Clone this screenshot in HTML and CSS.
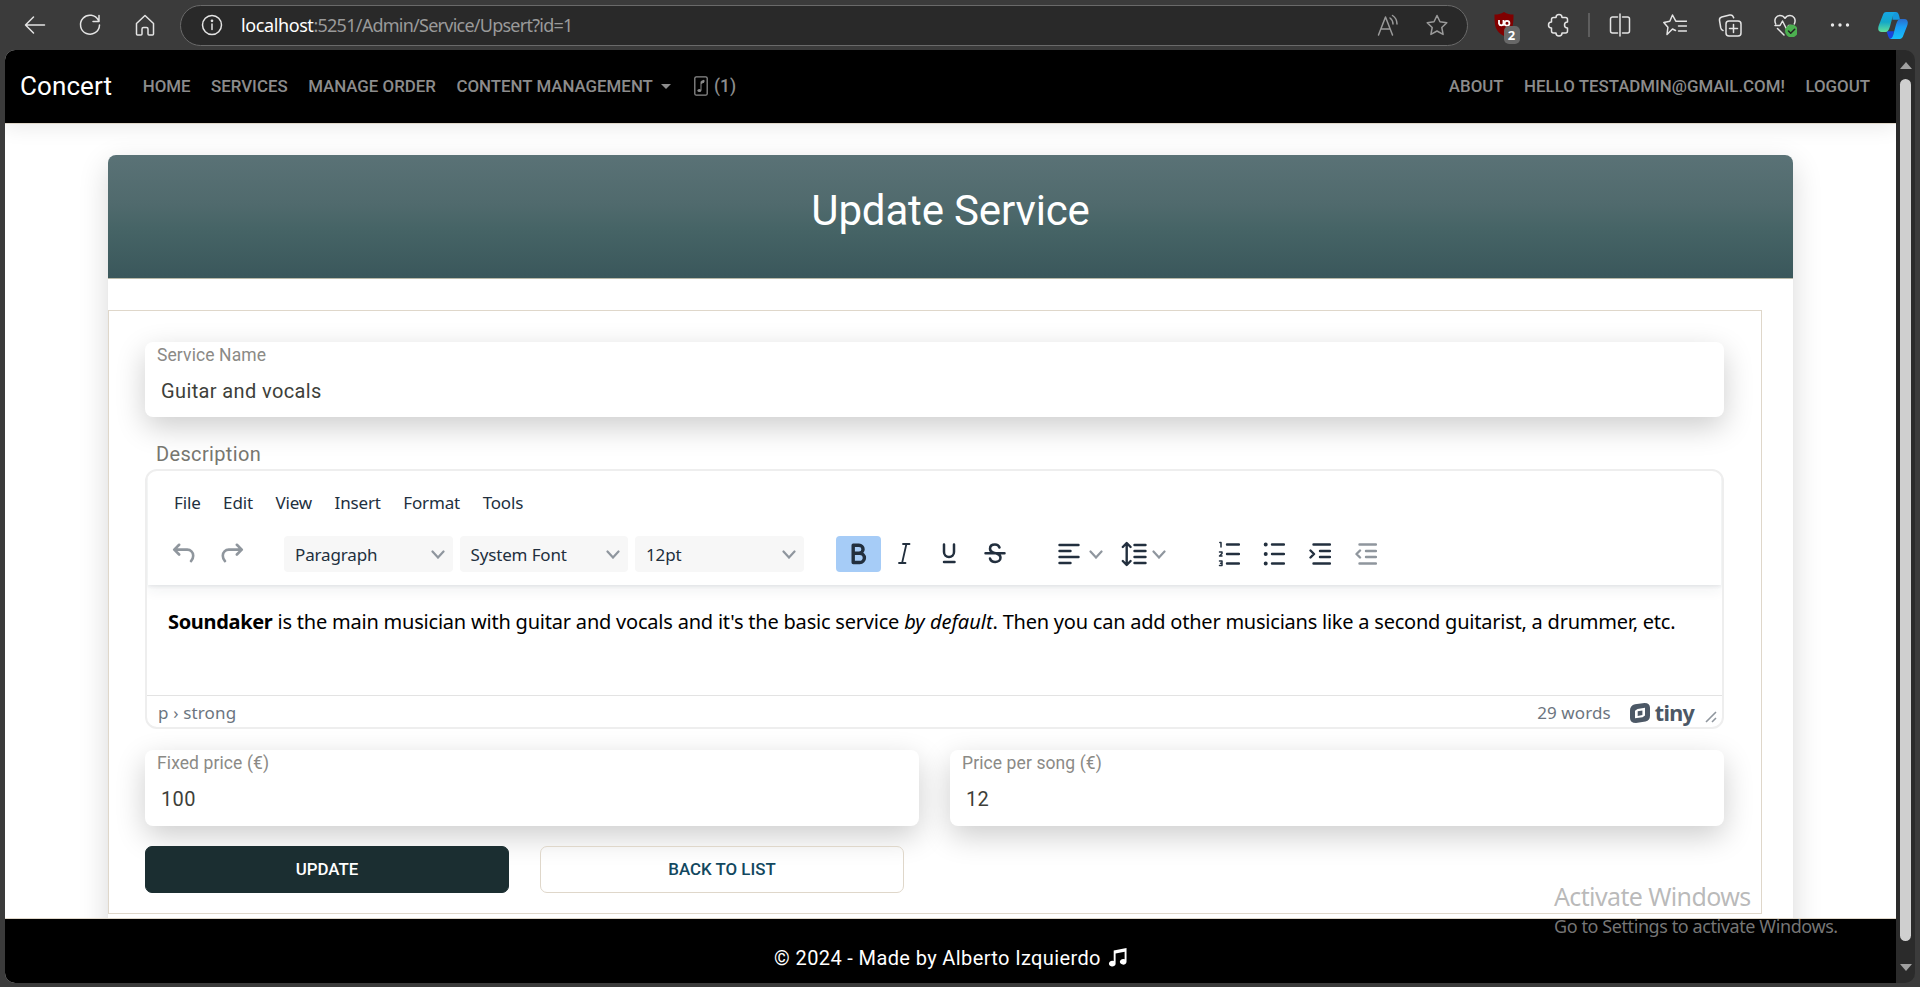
FILE: index.html
```html
<!DOCTYPE html>
<html lang="en">
<head>
<meta charset="utf-8">
<title>Update Service - Concert</title>
<link rel="stylesheet" href="styles.css">
</head>
<body>
<div class="browser">
  <header class="chrome">
    <svg class="ic back" viewBox="0 0 24 24"><path d="M21.500 12H3M10.500 4 2.500 12l8 8"/></svg>
    <svg class="ic reload" viewBox="0 0 24 24"><path d="M20.500 7.500A9.500 9.500 0 1 0 21.500 12M21 2.500v6h-6"/></svg>
    <svg class="ic home" viewBox="0 0 24 24"><path d="M3.500 10.500 12 2.500l8.500 8V21a1 1 0 0 1-1 1h-3.500a1 1 0 0 1-1-1v-5a1.500 1.500 0 0 0-1.500-1.500h-3A1.500 1.500 0 0 0 9 16v5a1 1 0 0 1-1 1H4.500a1 1 0 0 1-1-1z"/></svg>
    <div class="address">
      <svg class="ic info" viewBox="0 0 24 24"><circle cx="12" cy="12" r="9.500"/><path d="M12 11v5.500"/><circle cx="12" cy="7.800" r=".6"/></svg>
      <span class="url"><b>localhost</b>:5251/Admin/Service/Upsert?id=1</span>
      <svg class="ic aloud" viewBox="0 0 24 24"><path d="M2.500 22 9.500 4l7 18M5 16h9M14 5c2 1.500 3 3.500 3 6M16.500 2.500c3 2 4.500 5 4.500 8.500"/></svg>
      <svg class="ic star" viewBox="0 0 24 24"><path d="m12 2.500 3 6.300 6.800.9-5 4.800 1.300 6.900L12 18l-6.100 3.400 1.300-6.900-5-4.800 6.800-.9z"/></svg>
    </div>
    <div class="ext">
      <svg class="shield" viewBox="0 0 24 26"><path fill="#800000" d="M12 0c3 2 6 2.500 9.500 2.500 0 11-.5 17-9.500 21.500C3 19.500 2.500 13.500 2.500 2.500 6 2.500 9 2 12 0z"/><path fill="none" stroke="#fff" stroke-width="1.800" d="M7 8v3.500a2.300 2.300 0 0 0 4.500 0V8M11.500 8v5.800"/><circle cx="15" cy="11.200" r="2.400" fill="none" stroke="#fff" stroke-width="1.800"/></svg>
      <span class="badge">2</span>
    </div>
    <svg class="ic puzzle" viewBox="0 0 24 24"><path d="M6.500 4.500H9a3 3 0 0 1 6 0h3.500a2 2 0 0 1 2 2V9a3 3 0 0 0 0 6v3a2 2 0 0 1-2 2H15a3 3 0 0 1-6 0H6.500a2 2 0 0 1-2-2v-3a3 3 0 0 1 0-6V6.500a2 2 0 0 1 2-2z"/></svg>
    <span class="divider"></span>
    <svg class="ic split" viewBox="0 0 24 24"><path d="M12 1v22M9.500 4h-5a2 2 0 0 0-2 2v12a2 2 0 0 0 2 2h5M14.500 4h5a2 2 0 0 1 2 2v12a2 2 0 0 1-2 2h-5"/></svg>
    <svg class="ic favs" viewBox="0 0 24 24"><path d="M12.500 17.500 9.500 16 4 21.500l.9-7.200L.8 9.500l6-1.300L9.500 2l3.300 6.200H23.500M15.500 13h8M15.500 18h8"/></svg>
    <svg class="ic coll" viewBox="0 0 24 24"><rect x="8" y="8" width="15" height="15" rx="3"/><path d="M15.500 11.500v8M11.500 15.500h8M5 17.500C3 17 3 16 2.700 14.500L1.500 7.500C1.200 5.500 2.200 4.500 3.700 4l8-2c2-.4 3.200.3 4 2.800"/></svg>
    <svg class="ic perf" viewBox="0 0 24 24"><path d="M2.700 11C.5 6 3.500 2.500 7 2.500c2 0 3.800 1 5 2.800 1.200-1.800 3-2.800 5-2.800 3.500 0 6.500 3.500 4.300 8.500M2 12.500h5L9.500 8l4 8 2-3.500h2M4.500 15.500 11 22"/><circle class="ok" cx="18.500" cy="18" r="6.500"/><path stroke-width="1.500" d="m15.500 18 2.200 2.200 4-4"/></svg>
    <svg class="ic dots" viewBox="0 0 24 24"><g fill="#e8e8e8" stroke="none"><circle cx="4.500" cy="12" r="1.700"/><circle cx="12" cy="12" r="1.700"/><circle cx="19.500" cy="12" r="1.700"/></g></svg>
    <svg class="copilot" viewBox="0 0 32 31" preserveAspectRatio="none"><defs><linearGradient id="cg1" x1="0" y1="0" x2="0" y2="1"><stop offset="0" stop-color="#16a6e6"/><stop offset=".5" stop-color="#14a8c8"/><stop offset="1" stop-color="#62e09a"/></linearGradient><linearGradient id="cg2" x1="0" y1="0" x2="0" y2="1"><stop offset="0" stop-color="#18c0f8"/><stop offset=".6" stop-color="#1a9cf4"/><stop offset="1" stop-color="#2a6ccc"/></linearGradient></defs><path fill="#1846dc" d="M9 22h8l-1 9h-2c-3 0-3-4-5-9z"/><path fill="#1698dc" d="M15 0h4q2.500 0 3.500 4l1 5h-8z"/><path fill="url(#cg1)" d="M9 0h11q-3 0-4.300 5l-3 12q-1.700 6-4.700 6H4c-4 0-4.500-4-3-8L5 4q1-4 4-4z"/><path fill="url(#cg2)" transform="rotate(180 16 15.500)" d="M9 0h11q-3 0-4.300 5l-3 12q-1.700 6-4.700 6H4c-4 0-4.500-4-3-8L5 4q1-4 4-4z"/></svg>
  </header>

  <div class="viewport">
    <div class="page">
      <nav class="navbar">
        <span class="brand">Concert</span>
        <span class="link">HOME</span>
        <span class="link">SERVICES</span>
        <span class="link">MANAGE ORDER</span>
        <span class="link drop">CONTENT MANAGEMENT</span>
        <span class="link cart"><svg viewBox="0 0 14 20"><rect x=".8" y=".8" width="12.400" height="18.400" rx="1.500" fill="none" stroke="currentColor" stroke-width="1.300"/><path d="M7 14V5.500l3-1.300v2L7 7.500" fill="currentColor" stroke="currentColor" stroke-width="1"/><ellipse cx="5.400" cy="14.500" rx="2" ry="1.600" fill="currentColor"/></svg>(1)</span>
        <span class="link push">ABOUT</span>
        <span class="link">HELLO TESTADMIN@GMAIL.COM!</span>
        <span class="link">LOGOUT</span>
      </nav>

      <main class="main">
        <section class="card">
          <h1 class="card-head">Update Service</h1>
          <form class="form">
            <div class="field first"><label>Service Name</label><span class="val">Guitar and vocals</span></div>
            <div class="desc">Description</div>
            <div class="editor">
              <div class="ed-top">
                <div class="menu"><span>File</span><span>Edit</span><span>View</span><span>Insert</span><span>Format</span><span>Tools</span></div>
                <div class="tools">
                  <svg class="ti dim undo" viewBox="0 0 24 24"><path d="M7.500 3.500 3 8l4.500 4.500M3.500 8H15a5.500 5.500 0 0 1 5.500 5.500c0 2-.7 3.500-2 5"/></svg>
                  <svg class="ti dim redo" viewBox="0 0 24 24"><path d="M16.500 3.500 21 8l-4.500 4.500M20.500 8H9a5.500 5.500 0 0 0-5.500 5.500c0 2 .7 3.500 2 5"/></svg>
                  <div class="selects">
                    <span class="sel"><span>Paragraph</span><svg class="chev" viewBox="0 0 14 9"><path d="m1.500 1.500 5.500 6 5.500-6"/></svg></span>
                    <span class="sel"><span>System Font</span><svg class="chev" viewBox="0 0 14 9"><path d="m1.500 1.500 5.500 6 5.500-6"/></svg></span>
                    <span class="sel"><span>12pt</span><svg class="chev" viewBox="0 0 14 9"><path d="m1.500 1.500 5.500 6 5.500-6"/></svg></span>
                  </div>
                  <div class="marks">
                    <span class="btn on"><svg class="ti" viewBox="0 0 30 30"><path stroke-width="3.400" d="M10.200 6.200h5.800a4 4 0 0 1 0 8.100h-5.800zM10.200 14.300h6.600a4.600 4.600 0 0 1 0 9.200h-6.600z"/></svg></span>
                    <span class="btn"><svg class="ti" viewBox="0 0 30 30"><path stroke-width="1.800" d="M14 5h6.500M10 24h6.500M17.400 5l-4.300 19"/></svg></span>
                    <span class="btn"><svg class="ti" viewBox="0 0 30 30"><path d="M10 5.500v7.500a5 5 0 0 0 10 0V5.500M10 23h10.500"/></svg></span>
                    <span class="btn"><svg class="ti" viewBox="0 0 30 30"><path d="M19.500 8.500C18.800 6.500 17 5.500 15 5.500c-2.800 0-5 1.500-5 4.200 0 2 1.300 3.200 3.600 3.900l3 .9c2.600.8 3.900 2 3.900 4.200 0 2.700-2.400 4.300-5.300 4.300-2.700 0-4.500-1.300-5.200-3.500M5.500 14.300h19"/></svg></span>
                  </div>
                  <div class="aligns">
                    <svg class="ti w22" viewBox="0 0 22 24"><path d="M1.500 3h19M1.500 9h11M1.500 15h19M1.500 21h11"/></svg>
                    <svg class="chev" viewBox="0 0 14 9"><path d="m1.500 1.500 5.500 6 5.500-6"/></svg>
                    <svg class="ti lh" viewBox="0 0 26 26"><path d="M13.500 4h11M13.500 10h11M13.500 16h11M13.500 22h11M5.700 2.500v21M1.800 6l3.900-4 3.900 4M1.800 20l3.900 4 3.900-4"/></svg>
                    <svg class="chev" viewBox="0 0 14 9"><path d="m1.500 1.500 5.500 6 5.500-6"/></svg>
                  </div>
                  <div class="lists">
                    <svg class="ti w22" viewBox="0 0 22 26"><path d="M9 3.500h12M9 13h12M9 22.500h12"/><path stroke-width="1.500" d="M1.800 1.500h1.200V6M1.500 11h2.500v1.500l-2.500 2.500h2.500M1.500 20h2.500v4.500H1.500M2.500 22.200h1.500"/></svg>
                    <svg class="ti w22" viewBox="0 0 22 26"><path d="M9 3.500h12M9 13h12M9 22.500h12"/><path stroke-width="4" d="M2.700 3.500h.01M2.700 13h.01M2.700 22.500h.01"/></svg>
                    <svg class="ti w22" viewBox="0 0 22 26"><path d="M4.500 3.500H21M11 10h10M11 16h10M4.500 22.500H21M1.500 9.500 5 13l-3.500 3.500"/></svg>
                    <svg class="ti w22 dim" viewBox="0 0 22 26"><path d="M4.500 3.500H21M11 10h10M11 16h10M4.500 22.500H21M5 9.500 1.500 13 5 16.500"/></svg>
                  </div>
                </div>
              </div>
              <p class="ed-body"><b>Soundaker</b><span class="t1"> is the main musician with guitar and vocals and it's the basic service </span><i>by default</i><span class="t2">. Then you can add other musicians like a second guitarist, a drummer, etc.</span></p>
              <div class="status">
                <span class="path">p › strong</span>
                <span class="words">29 words</span>
                <span class="tiny"><svg viewBox="0 0 20 20"><path fill="#4c5866" d="M5 1.300 14.500 0Q20 0 20 5v7.500q0 5-4.500 6L6 20Q0 20 0 15V7.500Q0 2.500 5 1.300z"/><path fill="#fff" d="M7.500 6 15 4.800v7.700l-2.500 1.700L5 15.300V7.700z"/><path fill="#4c5866" d="m7.700 8.200 4.700-.8v4.700l-4.700.8z"/></svg>tiny</span>
                <svg class="grip" viewBox="0 0 12 12"><path d="M1 11 11 1M7 11l4-4"/></svg>
              </div>
            </div>
            <div class="row">
              <div class="field"><label>Fixed price (€)</label><span class="val">100</span></div>
              <div class="field"><label>Price per song (€)</label><span class="val">12</span></div>
            </div>
            <div class="actions"><span class="action primary">UPDATE</span><span class="action">BACK TO LIST</span></div>
          </form>
        </section>
      </main>

      <footer class="footer">© 2024 - Made by Alberto Izquierdo <svg viewBox="0 0 20 20"><path fill="#fff" d="M6 2.500 19.500 0v14.500a3.500 3 0 1 1-2-2.700V4L8 5.800v10.700a3.500 3 0 1 1-2-2.700z"/></svg></footer>
    </div>
    <div class="scroll"><i class="up"></i><i class="thumb"></i><i class="down"></i></div>
  </div>
  <div class="watermark"><div class="w1">Activate Windows</div><div class="w2">Go to Settings to activate Windows.</div></div>
</div>
</body>
</html>
```
FILE: styles.css
```css
* { box-sizing: border-box; }
body { margin: 0; background: #3b3b3b; font-family: Roboto, sans-serif; }
.browser { position: relative; width: 1920px; height: 987px; overflow: hidden; background: #3b3b3b; }
svg { display: block; flex: none; }

/* Browser toolbar */
.chrome { display: flex; align-items: center; height: 50px; padding-left: 23px; }
.ic { flex: none; width: 24px; height: 24px; fill: none; stroke: #e4e4e4; stroke-width: 1.5; stroke-linecap: round; stroke-linejoin: round; }
.reload, .home { margin-left: 31px; }
.address { display: flex; flex: none; align-items: center; width: 1288px; height: 41px; margin-left: 23px; padding: 0 18px 0 19px; background: #292929; border: 1px solid #6a6a6a; border-radius: 21px; }
.url { margin-left: 17px; font: 18px "Noto Sans", sans-serif; letter-spacing: -.75px; color: #9a9a9a; white-space: nowrap; }
.url b { font-weight: 400; color: #fff; letter-spacing: -.4px; }
.aloud { margin-left: auto; stroke: #9a9a9a; }
.star { margin-left: 25px; stroke: #9a9a9a; }
.ext { position: relative; width: 24px; height: 26px; margin-left: 23.500px; }
.shield { width: 24px; height: 26px; }
.badge { position: absolute; left: 12px; top: 14px; width: 16px; height: 18px; border-radius: 5px; background: #686868; color: #fff; font: bold 13px/18px "Noto Sans", sans-serif; text-align: center; }
.puzzle { margin-left: 31.500px; }
.divider { width: 2px; height: 24px; margin: 0 18px 0 17px; background: #5e5e5e; }
.favs, .coll, .perf, .dots { margin-left: 31px; }
.ok { fill: #4caf50; stroke: none; }
.perf path:last-child { stroke: #222; }
.copilot { width: 30px; height: 27px; margin-left: 26px; }

.viewport { display: flex; width: 1910px; height: 933px; margin-left: 5px; border-radius: 10px; overflow: hidden; background: #2b2b2b; }
.page { display: flex; flex-direction: column; width: 1891px; height: 933px; background: #fff; }

.navbar { display: flex; align-items: center; flex: none; height: 74px; padding: 0 26px 1px 15px; background: #000; border-bottom: 1px solid #dfd7ca; box-shadow: 0 3px 20px rgba(0,0,0,.09); }
.brand { margin-right: 10px; font-size: 26px; color: #fff; letter-spacing: .1px; }
.link { margin-left: 20.500px; font-size: 16.875px; font-weight: 500; color: #8c8c8c; white-space: nowrap; }
.push { margin-left: auto; }
.drop { display: flex; align-items: center; }
.drop::after { content: ""; margin-left: 8px; border: 5px solid transparent; border-top-color: currentColor; border-bottom: 0; }
.cart { display: flex; align-items: center; gap: 6px; margin-left: 23px; font-size: 17.500px; }
.cart svg { width: 14px; height: 20px; }

.main { flex: 1; min-height: 0; overflow: hidden; padding: 31px 98px 0 103px; }
.card { width: 1685px; height: 790px; background: #fff; border-radius: 8px; box-shadow: 0 10px 30px rgba(0,0,0,.16); }
.card-head { height: 124px; margin: 0; padding-top: 31px; border-bottom: 1px solid #b9b9a8; border-radius: 8px 8px 0 0; background: linear-gradient(#5a7276, #506a6d 40%, #466466 60%, #3a575b); color: #fff; font-size: 42px; line-height: 50px; font-weight: 400; letter-spacing: -.15px; text-align: center; }
.form { width: 1654px; height: 604px; margin-top: 31px; padding: 31px 37px 0 36px; border: 1px solid #dfd7ca; }
.field { display: flex; flex-direction: column; height: 76px; padding: 3px 12px 0; border-radius: 8px; background: #fff; box-shadow: 0 10px 30px rgba(0,0,0,.2); }
.first { height: 75px; }
.field label { font-size: 17.500px; line-height: 20px; letter-spacing: .1px; color: #8b8a86; }
.val { margin: 14px 0 0 4px; font-size: 20px; line-height: 24px; letter-spacing: .38px; color: #3e3f3a; }
.desc { height: 52px; padding: 25px 0 0 11px; font-size: 20px; line-height: 24px; letter-spacing: .35px; color: #77766f; }

/* Rich text editor */
.editor { display: flex; flex-direction: column; height: 260px; border: 2px solid #eee; border-radius: 12px; background: #fff; font-family: "Noto Sans", sans-serif; overflow: hidden; }
.ed-top { height: 114px; margin: 0 1px; box-shadow: 0 2px 3px rgba(34,47,62,.07), 0 6px 12px rgba(34,47,62,.06); }
.menu { display: flex; gap: 22.500px; padding: 20px 0 0 26px; font-size: 17px; line-height: 24px; letter-spacing: -.15px; color: #222f3e; }
.tools { display: flex; align-items: center; height: 36px; margin-top: 21px; padding-left: 23px; }
.ti { width: 26px; height: 26px; fill: none; stroke: #222f3e; stroke-width: 2.400; stroke-linecap: round; stroke-linejoin: round; }
.dim { opacity: .5; }
.redo { margin-left: 22px; }
.selects { display: flex; gap: 7px; margin-left: 39px; }
.sel { display: flex; align-items: center; justify-content: space-between; width: 168.500px; height: 36px; padding: 0 8px 0 11px; border-radius: 4px; background: #f7f7f7; font-size: 17px; letter-spacing: -.15px; color: #222f3e; }
.chev { width: 14px; height: 9px; fill: none; stroke: #8f969e; stroke-width: 2.200; stroke-linecap: round; }
.marks { display: flex; margin-left: 32px; }
.btn { display: flex; align-items: center; justify-content: center; width: 45.500px; height: 36px; border-radius: 4px; }
.btn .ti { width: 30px; height: 30px; stroke-width: 2.500; }
.on { background: #a6ccf7; }
.w22.ti { width: 22px; }
.aligns { display: flex; align-items: center; margin-left: 40.500px; }
.aligns .chev { margin-left: 9px; }
.lh { margin-left: 18px; }
.aligns .lh + .chev { margin-left: 5px; }
.lists { display: flex; gap: 23.700px; margin-left: 51.500px; }
.ed-body { flex: 1; margin: 0; padding: 23px 0 0 21px; font-size: 20px; line-height: 28px; color: #000; white-space: nowrap; letter-spacing: -.33px; }
.t1 { letter-spacing: -.21px; }
.ed-body i { letter-spacing: 0; }
.t2 { letter-spacing: -.23px; }
.status { display: flex; align-items: center; height: 32px; padding: 2px 5px 0 11px; border-top: 1px solid #e3e3e3; font-size: 17px; color: #6c7580; }
.path { letter-spacing: .15px; }
.words { margin-left: auto; letter-spacing: .1px; }
.tiny { display: flex; align-items: center; gap: 5px; height: 22px; margin: 0 11px 0 19px; font: bold 21.500px/18px "Noto Sans", sans-serif; color: #4c5866; letter-spacing: -.7px; }
.tiny svg { width: 20px; height: 20px; }
.grip { width: 12px; height: 12px; margin-top: 8px; fill: none; stroke: #8f969e; stroke-width: 1.600; }

.row { display: grid; grid-template-columns: 774px 774px; gap: 31px; margin-top: 21px; }
.actions { display: flex; gap: 31px; margin-top: 20px; position: relative; }
.action { width: 364px; height: 47px; border: 1px solid #dfd7ca; border-radius: 7px; font-size: 16.875px; line-height: 45px; font-weight: 500; text-align: center; color: #12485f; }
.primary { background: #1b2e31; border-color: #1b2e31; color: #fff; }

.footer { display: flex; justify-content: center; align-items: center; gap: 7px; flex: none; height: 65px; padding-top: 13px; border-top: 1px solid #dfd7ca; background: #000; color: #fff; font-size: 20px; letter-spacing: .38px; }
.footer svg { width: 19px; height: 19px; }

.scroll { display: flex; flex-direction: column; align-items: center; width: 19px; padding-top: 12px; }
.up { border: 6px solid transparent; border-bottom: 7px solid #a0a0a0; border-top: 0; }
.thumb { width: 11px; height: 862px; margin-top: 10px; border-radius: 6px; background: #cfcfcf; }
.down { margin-top: 23px; border: 6px solid transparent; border-top: 7px solid #a0a0a0; border-bottom: 0; }

/* Desktop overlay */
.watermark { position: absolute; left: 1554px; top: 879px; font-family: "Noto Sans", sans-serif; color: rgba(140,140,140,.6); white-space: nowrap; }
.w1 { font-size: 25px; line-height: 34px; letter-spacing: -.63px; }
.w2 { margin-top: 1px; font-size: 18px; line-height: 24px; color: rgba(140,140,140,.85); letter-spacing: -.41px; }
```
